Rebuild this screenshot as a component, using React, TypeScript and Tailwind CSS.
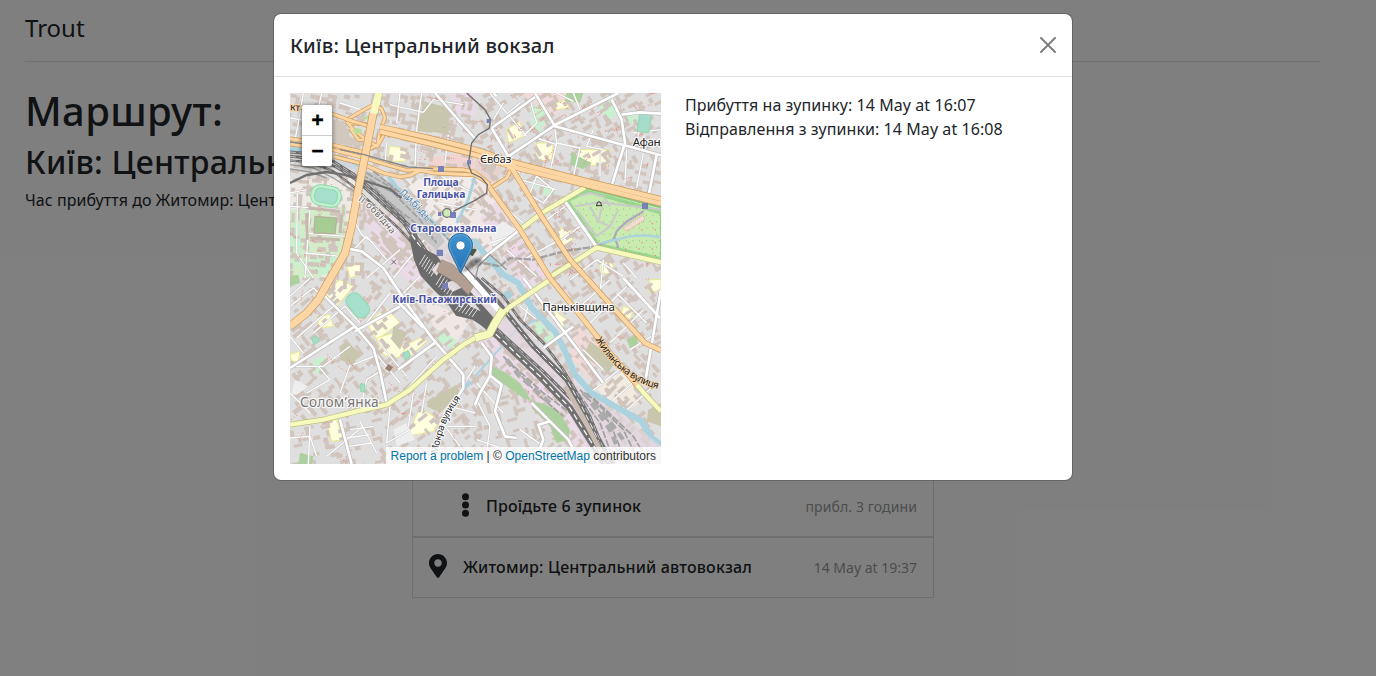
import React from "react";

type Pt = [number, number];

function rng(seed: number) {
  let s = seed;
  return () => {
    s = (s * 1664525 + 1013904223) % 4294967296;
    return s / 4294967296;
  };
}

/* Orientation of the street grid around a point of the map (map units). */
function blockAngle(x: number, y: number) {
  if (x < 560 && y < 250) return 13;
  if (x < 240 && y < 560) return 3;
  if (x < 560 && y < 620) return 42;
  if (x < 560) return x < 260 && y > 980 ? -12 : -38;
  if (y < 200) return -30;
  if (y < 330 && x > 760) return 14;
  if (x < 760 && y > 900) return 75;
  return y < 760 ? -32 : 48;
}

function makeBuildings() {
  const r = rng(42);
  const out: { x: number; y: number; w: number; h: number; a: number; l: boolean }[] = [];
  for (let y = 8; y < 1113; y += 25) {
    for (let x = 8; x < 1113; x += 27) {
      const px = x + (r() - 0.5) * 14;
      const py = y + (r() - 0.5) * 12;
      const flip = r() > 0.6 ? 90 : 0;
      const w = 14 + r() * 20;
      const h = 7 + r() * 6;
      const l = r() > 0.76;
      const sparse = (px < 560 && py > 560) || (px < 760 && py > 820);
      if (r() < (sparse ? 0.36 : 0.16)) continue;
      out.push({ x: px, y: py, w, h, a: blockAngle(px, py) + flip, l });
    }
  }
  return out;
}

function makeDots(n: number, seed: number, x0: number, y0: number, x1: number, y1: number): Pt[] {
  const r = rng(seed);
  const out: Pt[] = [];
  for (let i = 0; i < n; i++) {
    let x = x0 + r() * (x1 - x0);
    let y = y0 + r() * (y1 - y0);
    const run = 1 + Math.floor(r() * 5);
    const dx = (r() - 0.5) * 16;
    const dy = (r() - 0.5) * 16;
    for (let k = 0; k < run; k++) {
      out.push([x, y]);
      x += dx;
      y += dy;
    }
  }
  return out;
}

const buildings = makeBuildings();
const trees = [
  ...makeDots(60, 7, 560, 0, 1113, 260),
  ...makeDots(45, 9, 780, 330, 1113, 540),
  ...makeDots(40, 11, 560, 300, 1113, 900),
  ...makeDots(40, 13, 0, 560, 540, 1100),
  ...makeDots(24, 17, 0, 240, 200, 540),
  ...makeDots(20, 19, 380, 20, 560, 200),
];
const parkTrees: Pt[] = [];
for (let y = 310; y < 540; y += 19) for (let x = 840 + (y % 2) * 9; x < 1113; x += 20) parkTrees.push([x, y]);

const minorRoads = [
  "M40 0 25 90 15 140", "M95 0 85 45", "M0 75 60 85", "M150 30 230 55", "M330 0 320 90", "M395 0 380 110",
  "M300 35 400 58", "M400 58 430 20 520 35", "M380 110 375 220", "M475 125 465 210", "M290 150 285 215",
  "M0 340 150 350", "M22 300 20 480 70 555", "M60 350 45 555", "M45 480 150 490", "M45 420 165 430",
  "M0 300 50 290", "M190 470 230 430 290 500", "M190 380 215 425 250 450", "M310 555 420 420",
  "M230 555 330 470", "M340 600 420 520", "M440 330 555 350", "M400 350 460 420", "M455 250 550 300",
  "M0 610 60 555", "M0 640 70 585 130 640 20 735", "M70 720 165 640 210 690", "M0 820 100 820 180 760",
  "M85 820 120 860 50 900", "M180 815 150 900", "M190 815 250 790", "M215 930 230 860 270 835",
  "M0 900 60 960", "M40 780 0 730", "M240 760 330 870", "M265 745 350 850", "M230 690 340 640 400 700",
  "M300 600 230 690", "M330 910 440 790", "M300 940 290 1050 360 1010", "M370 900 355 1000",
  "M410 870 395 960", "M110 1090 220 1000", "M180 1010 250 1000", "M170 1035 240 1025", "M175 1060 245 1050",
  "M210 985 260 1080", "M0 1035 60 1030 80 1090", "M60 1000 55 1113", "M450 980 510 1060", "M480 940 555 960",
  "M530 860 555 820", "M470 1000 555 1000", "M600 0 650 60 710 130", "M640 30 610 80", "M655 60 690 30",
  "M720 20 740 90 700 130", "M850 0 870 50", "M800 0 850 25", "M910 110 890 160 940 170",
  "M795 110 800 150 780 235", "M800 150 870 165 850 250", "M1060 60 1040 150", "M1113 110 1030 120",
  "M930 180 930 250", "M1010 170 1005 270", "M1060 180 1040 285", "M800 155 740 135", "M690 240 640 210",
  "M690 260 800 290", "M720 300 740 250 790 290 760 330 710 300", "M770 380 840 330", "M800 450 870 400 900 430",
  "M640 340 700 390", "M650 470 740 550", "M600 450 690 420", "M700 500 810 440", "M840 560 920 500 1000 550",
  "M1000 510 1040 555", "M940 500 930 600", "M900 690 1010 580", "M960 750 1060 650", "M870 640 960 560",
  "M980 600 1070 690", "M1020 770 1100 720", "M720 620 700 690 740 740", "M690 640 740 680",
  "M560 610 600 680", "M940 830 880 770", "M900 900 1000 820 1060 900", "M960 930 1050 850", "M1000 960 1090 880",
  "M560 920 600 1000 590 1080", "M560 1040 620 1060 680 1100", "M760 1060 690 1010", "M560 870 640 960",
];

const whiteRoads = [
  "M735 0 795 100 1113 187", "M655 190 795 96 985 0", "M605 105 735 12", "M605 105 655 190 670 225",
  "M435 0 500 75 558 140", "M610 0 620 10", "M965 20 995 80 1005 150 965 278", "M995 65 1050 58 1113 62",
  "M1100 185 1075 312", "M690 410 600 480 550 525", "M825 325 920 462",
  "M100 605 195 700 250 765 270 835 290 930", "M300 555 360 645 430 740 520 845 520 885 450 995 430 1075",
  "M400 705 310 612", "M195 715 330 640", "M325 830 440 745", "M0 825 195 700",
  "M150 980 185 1113", "M165 465 215 475 280 525 310 570", "M700 555 940 870", "M1113 590 1065 870",
  "M600 848 570 900 555 935", "M600 848 635 875 615 955 645 1030 680 1035",
  "M725 930 780 985 835 1040 850 1070", "M780 985 745 995 760 1040 750 1065 700 1090",
  "M1000 555 1110 675", "M760 765 850 700", "M575 750 605 790 600 848",
];

const orangeRoads = [
  "M250 60 225 190 205 290 185 400 165 480 110 575 85 620 50 660 0 700",
  "M600 285 690 410 780 555 885 685 960 780 1040 875",
  "M665 225 755 370 840 500 890 555 975 650 1065 750 1113 772",
];

function Casing({ d, w, c, f }: { d: string[]; w: number; c: string; f: string }) {
  return (
    <g fill="none" strokeLinejoin="round">
      {d.map((p) => <path key={"c" + p} d={p} stroke={c} strokeWidth={w + 4} />)}
      {d.map((p) => <path key={"f" + p} d={p} stroke={f} strokeWidth={w} />)}
    </g>
  );
}

function Tracks({ d, w, dash = "18 10" }: { d: string; w: number; dash?: string }) {
  return (
    <g fill="none">
      <path d={d} stroke="#707070" strokeWidth={w} />
      <path d={d} stroke="#f5f5f5" strokeWidth={w * 0.2} strokeDasharray={dash} />
    </g>
  );
}

function Halo({ children, ...p }: React.SVGProps<SVGTextElement>) {
  return (
    <text stroke="#fff" strokeOpacity={0.85} strokeWidth={7} strokeLinejoin="round" paintOrder="stroke" {...p}>
      {children}
    </text>
  );
}

function CityMap() {
  return (
    <svg className="block h-full w-full" viewBox="0 0 1113 1113" fontFamily="'Noto Sans', sans-serif">
      <rect width="1113" height="1113" fill="#e0dfdf" />
      <g>
        <path d="M0 260 200 255 190 460 130 555H0Z" fill="#eeebe7" />
        <path d="M0 350 170 340 160 470 90 555H0Z" fill="#d3ecc9" />
        <path d="M340 260 560 250V440L440 390Z" fill="#f1ece9" />
        <path d="M415 195 510 180 555 195V230L420 222Z" fill="#f2d5d3" />
        <path d="M560 170 640 215 620 275 555 235Z" fill="#e8d2ce" />
        <path d="M555 250 600 290 690 410 590 490 500 440Z" fill="#f0e8e6" />
        <path d="M620 320 690 400 630 440 570 380Z" fill="#ebdbe8" />
        <path d="M630 480 690 430 780 555 700 590Z" fill="#ebdbe8" />
        <path d="M200 300 320 380 430 530 380 590 250 460Z" fill="#ebdbe8" />
        <path d="M480 0H555V70L500 60Z" fill="#ebdbe8" />
        <path d="M690 0 840 0 800 70 730 30Z" fill="#f0dada" />
        <path d="M555 730 640 680 790 810 890 900 1113 1060V1113H900L760 1000Z" fill="#ebdbe8" />
        <path d="M860 700 940 760 900 860 840 790Z" fill="#f2dad9" />
        <path d="M910 880 1010 830 1050 930 1000 960Z" fill="#f1ebe0" />
        <path d="M400 620 540 680 500 750 430 700Z" fill="#f0e8e6" />
      </g>
      <g>
        {["M300 160 350 165 345 205 290 205Z", "M230 690 290 645 330 690 260 740Z", "M260 735 310 720 350 780 310 800 275 780Z", "M340 760 400 730 410 745 350 800Z", "M390 945 450 980 430 1015 350 1030Z", "M110 985 140 980 160 1040 125 1045Z", "M100 600 150 560 190 580 140 640Z", "M80 670 120 665 130 700 90 705Z", "M650 110 690 85 700 130 655 150Z", "M740 150 790 150 785 200 735 205Z", "M870 170 960 170 950 220 860 215Z", "M790 30 840 20 835 45 800 50Z", "M800 410 840 400 850 440 820 460Z", "M930 510 970 510 965 545 930 540Z", "M790 650 830 680 815 710 790 680Z", "M1000 640 1030 650 1020 680 995 660Z", "M1080 560 1113 560V590L1075 600Z", "M170 520 215 510 220 540 180 555Z", "M0 785 30 775 25 805 5 805Z"].map((d) => (
          <path key={d} d={d} fill="#ffffe0" stroke="#ece98c" strokeWidth="3" />
        ))}
        {["M720 40 760 40 770 90 730 110Z", "M930 30 970 20 985 60 960 80 930 60Z", "M730 60 760 120 720 110Z", "M1000 65 1040 65 1040 95 1010 90Z", "M0 400 30 390 40 520 0 520Z", "M60 490 150 490 130 550 70 540Z", "M70 800 110 790 100 840 70 840Z", "M450 710 500 740 490 770 440 740Z", "M700 250 800 300 780 320Z", "M740 680 790 730 770 760 720 720Z"].map((d) => (
          <path key={d} d={d} fill="#c9f0cf" />
        ))}
      </g>
      <g fill="#d1c5bd" stroke="#c9bbb2" strokeWidth="0.6">
        {buildings.map((b, i) => (
          <path
            key={i}
            transform={`translate(${b.x.toFixed(1)} ${b.y.toFixed(1)}) rotate(${b.a})`}
            d={b.l ? `M0 0H${b.w.toFixed(0)}V${(b.h * 2).toFixed(0)}H${(b.w - 8).toFixed(0)}V${b.h.toFixed(0)}H0Z` : `M0 0H${b.w.toFixed(0)}V${b.h.toFixed(0)}H0Z`}
          />
        ))}
        <path d="M225 335 275 365 300 400 285 415 235 365ZM320 400 365 430 370 470 355 470ZM270 420 320 455 345 500 325 505 280 450Z" />
        <path d="M560 170 585 165 625 200 610 240 575 215ZM645 760 720 800 715 815 640 780Z" />
      </g>
      {["M130 80 165 85 180 130 230 150 215 160 130 150Z", "M400 25 480 45 475 120 380 115Z", "M150 760 175 750 210 780 190 815 150 800Z", "M310 700 350 720 330 770 305 740Z", "M900 745 980 800 955 840 880 790Z", "M420 920 500 875 510 900 450 960 410 940Z", "M1075 950 1113 930V1000L1070 985Z"].map((d, i) => (
        <path key={d} d={d} fill={i === 0 ? "#d2c8bf" : "#c8c7ad"} />
      ))}
      {["M830 0 880 0 870 30 825 25Z", "M845 175 865 190 905 210 880 228 840 215Z", "M1010 740 1040 725 1045 755 1020 765Z", "M0 550 25 545 30 570 0 580Z", "M30 1080 70 1090 65 1113 25 1113Z"].map((d) => (
        <path key={d} d={d} fill="#add19e" />
      ))}
      <path d="M15 860 55 880 20 905 5 900ZM310 1010 350 990 375 1040 320 1060Z" fill="#eee" />
      <path d="M600 410 640 385 680 412 610 462Z" fill="#eee" />
      <g fill="none" strokeLinejoin="round">
        {minorRoads.map((d) => <path key={d} d={d} stroke="#c4c2c2" strokeWidth="6.5" />)}
        {minorRoads.map((d) => <path key={"w" + d} d={d} stroke="#fff" strokeWidth="4" />)}
      </g>
      <g fill="#f3766b" fillOpacity="0.85">
        {trees.map(([x, y], i) => <circle key={i} cx={x} cy={y} r="1.6" />)}
      </g>

      {/* stadiums and courts */}
      <g stroke="#8fd9ac" strokeWidth="3">
        <rect x="62" y="278" width="92" height="62" rx="28" fill="#c2f0cf" transform="rotate(10 108 309)" />
        <rect x="74" y="288" width="68" height="42" rx="15" fill="#a6e0cc" transform="rotate(10 108 309)" />
        <rect x="163" y="612" width="80" height="48" rx="20" fill="#a6e0cc" transform="rotate(50 202 637)" />
        <rect x="1045" y="60" width="36" height="58" rx="8" fill="#a6dccb" transform="rotate(8 1063 89)" />
        <path d="M340 780 355 772 362 790 345 800ZM65 735 80 730 88 745 72 755ZM212 872 225 874 225 898 212 895Z" fill="#a6dccb" />
      </g>
      <g stroke="#bcae9f" strokeWidth="4">
        <path d="M75 370 140 375 135 422 72 420Z" fill="#a5cd93" />
        <path d="M55 345 150 355M50 360 52 440M60 435 150 440M155 365 150 420" fill="none" stroke="#c7b8ae" strokeWidth="9" />
      </g>

      {/* park */}
      <path d="M885 285 1113 343V507L920 460 825 325Z" fill="#c9ebb0" stroke="#84c784" strokeWidth="5" />
      <path d="M885 288 1113 350V365L970 322 890 300 840 325 930 452 915 458 827 325Z" fill="#9ad690" />
      <path d="M925 455 1113 497" stroke="#9ad690" strokeWidth="10" fill="none" />
      <g fill="#5ea25e">{parkTrees.map(([x, y], i) => x > 830 + (y - 310) * 0.62 + 12 && y > 310 && y < 470 + (x - 920) * 0.2 && <circle key={i} cx={x} cy={y} r="1.4" />)}</g>
      <g fill="#f3766b">{parkTrees.map(([x, y], i) => y > 380 && x > 985 && i % 2 === 0 && y < 470 + (x - 920) * 0.2 && <circle key={i} cx={x + 7} cy={y + 6} r="2" />)}</g>
      <g fill="none" stroke="#c9c9c9" strokeWidth="6">
        <path d="M855 340 930 328 1113 350M865 310 900 300 940 310 960 340M860 350 920 430M940 325 925 385 900 340M920 430 960 400 985 350M925 385 960 400M870 395 910 415M1065 350 1020 385 985 405 970 440 920 455M980 440 985 465" />
      </g>
      <g fill="none" stroke="#aaaab8" strokeWidth="6"><path d="M1060 355 1010 385 980 415 970 440 925 457M975 435 985 465" /></g>
      <path d="M935 450 1020 430 1060 427 1113 432" fill="none" stroke="#aad3df" strokeWidth="7" />
      <path d="M1000 405 1060 365 1065 380 1010 415Z" fill="#efdcd2" stroke="#f3766b" strokeWidth="2" strokeDasharray="3 4" />

      {/* woods */}
      <path d="M605 820 650 840 690 870 725 925 700 915 650 880 605 850Z" fill="#add19e" />
      <path d="M730 925 770 935 810 960 840 1010 835 1040 800 1050 780 1000 725 945Z" fill="#add19e" />

      {/* river */}
      <g fill="none" stroke="#aad3df" strokeLinejoin="round">
        <path d="M0 168 60 174 140 203 215 228" strokeWidth="17" />
        <path d="M295 250 345 318 420 380 470 430" strokeWidth="12" />
        <path d="M555 250 535 320 500 390" strokeWidth="9" />
        <path d="M550 440 590 490 640 545 685 570 725 645 795 715 825 775 855 845 905 900 1055 985 1085 1035 1113 1055" strokeWidth="18" />
        <path d="M555 850 680 710 740 680" strokeWidth="6" />
        <path d="M525 885 540 865" strokeWidth="12" />
      </g>
      <circle cx="653" cy="606" r="13" fill="#aacfdb" />

      {/* railway yards */}
      <path d="M0 190Q100 170 190 240Q300 330 370 405T450 520L555 640L620 710L800 890L920 1113H1113V1060Q1010 970 890 900Q800 830 730 730L610 590L520 500L400 390L300 270L150 195Z" fill="#dfd6dd" fillOpacity="0.7" />
      <path d="M215 225 300 268 345 312 410 375 465 445 440 470 350 395 270 310 205 262Z" fill="#c6c6c6" />
      <g fill="none" stroke="#a0a0a0" strokeWidth="5" strokeDasharray="22 5">
        <path d="M215 245 310 300 390 380 440 450" />
        <path d="M230 240 330 300 410 385" />
        <path d="M250 235 350 315 440 400 520 490" />
        <path d="M235 265 290 320 350 380" />
        <path d="M300 330 370 385 430 440" />
        <path d="M870 890 960 990 1010 1113" />
        <path d="M890 900 1000 1010 1050 1113" />
        <path d="M910 915 1030 1030 1080 1113" />
        <path d="M850 880 930 990 975 1113" />
        <path d="M650 800 760 900 840 960" />
        <path d="M640 790 750 910 820 970" />
      </g>
      <g fill="none" stroke="#ababab" strokeWidth="13" strokeDasharray="24 16">
        <path d="M880 900 940 960 1000 1040" />
        <path d="M905 930 960 1010 990 1080" />
        <path d="M650 800 690 850 780 930" />
      </g>
      <path d="M470 550 545 575 580 630 540 640Z" fill="#e8e0e6" />
      <Tracks d="M0 177 60 182 130 205 190 243 260 300 320 360 370 410 395 465" w={9} />
      <Tracks d="M0 190 70 197 140 222 200 262 280 335 340 390 380 450" w={9} />
      <Tracks d="M0 203 60 207 130 235 190 280 260 345 330 410 380 465" w={7} />
      <path d="M0 215 70 225 130 255 200 300 M0 228 60 237 110 255" stroke="#9b9b9b" strokeWidth="4" fill="none" />
      <path d="M0 270 50 246 110 237 160 245 220 262 300 288 335 315" stroke="#707070" strokeWidth="7" fill="none" />
      <Tracks d="M365 425 420 500 500 600 560 670 640 745 750 850 840 945 945 1113" w={20} />
      <Tracks d="M385 440 440 520 520 600 570 660 650 735 760 835 850 925 930 1040 970 1113" w={9} />
      <path d="M358 432 392 462 440 487 478 540 545 600 625 690 600 715 548 680 498 668 470 628 432 592 392 548 372 500Z" fill="#6b6b6b" />
      <g fill="#dcd6d9">
        <path d="M425 530 446 506 458 520 440 548Z" />
        <path d="M462 573 492 560 520 582 488 596Z" />
        <path d="M520 612 548 622 572 655 540 640Z" />
      </g>
      <g stroke="#f1f1f1" strokeWidth="2.6">
        {[0, 1, 2, 3, 4, 5].map((i) => (
          <path key={i} d={`M${388 + i * 7} ${515 + i * 7}l18 -30M${438 + i * 8} ${576 + i * 7}l18 -30M${496 + i * 10} ${652 + i * 4}l20 -28`} />
        ))}
      </g>
      <path d="M455 500 490 515 550 580 535 605 500 570 440 535Z" fill="#b39f91" stroke="#9d8a7e" strokeWidth="2" />
      <path d="M495 490 555 455 562 470 525 505Z" fill="#c6c6c6" />
      <path d="M530 480Q545 462 560 470L548 490Z" fill="#4d5a48" />
      <Tracks d="M555 555 610 610 665 680 730 760 790 820 830 860 870 930 930 1050 955 1113" w={15} />
      <Tracks d="M575 555 640 610 690 680 760 750 820 830 850 880 900 970 960 1113" w={8} />
      <path d="M825 880 880 975 945 1100" stroke="#c9bbaf" strokeWidth="14" fill="none" />
      <path d="M515 525 640 660" stroke="#777" strokeWidth="24" fill="none" />
      <path d="M516 526 632 658" stroke="#fff" strokeWidth="18" fill="none" />
      <path d="M555 505 630 520 660 495 730 500 820 475 920 460" stroke="#8f8f8f" strokeWidth="7" strokeDasharray="22 4" opacity=".75" fill="none" />

      <Casing d={whiteRoads} w={8} c="#bcbaba" f="#fff" />
      <path d="M920 462 825 325" stroke="#fff" strokeWidth="8" fill="none" />
      <Casing d={["M885 283 755 360 690 410", "M775 555 920 464 1113 508", "M785 557 655 645 615 690", "M555 735 520 755 460 800 360 890 290 935 200 955 100 980 0 995", "M1040 875 1075 915 1113 955", "M270 0 262 40 240 110"]} w={13} c="#bcc07b" f="#f7fabf" />
      <Casing d={["M640 650 615 690 598 722 555 735"]} w={22} c="#bcc07b" f="#f7fabf" />

      {/* motorways and interchange */}
      <Casing d={["M165 83 205 60 250 35 275 48 285 75 275 100", "M170 85 190 110 235 145 262 160 268 120", "M180 90 245 95 240 70", "M180 105 205 140 235 142", "M275 100 285 120 265 155 230 172"]} w={8} c="#cf9a55" f="#fcd6a4" />
      <ellipse cx="203" cy="114" rx="13" ry="8" fill="#b9df9b" />
      <path d="M215 78 240 64 242 80Z" fill="#b9df9b" />
      <Casing d={["M30 43 125 62 185 84 250 103", "M0 137 120 154 220 178", "M0 153 130 171 225 195 300 218 350 232 430 227 520 230 555 237", "M130 190 215 212 280 240 330 252 360 247 390 232 430 240 555 246 595 270 600 287", "M600 287 650 255 665 225", "M555 238 600 275"]} w={9} c="#cf9a55" f="#fcd6a4" />
      <Casing d={["M270 101 420 135 558 170 660 205 895 265 1113 318", "M270 116 420 152 558 186 660 220 895 278 1113 332"]} w={13} c="#cf9a55" f="#fcd6a4" />
      <Casing d={[orangeRoads[0]]} w={21} c="#cf9a55" f="#fcd6a4" />
      <Casing d={orangeRoads.slice(1)} w={13} c="#cf9a55" f="#fcd6a4" />
      <path d="M266 0 250 62" stroke="#f7fabf" strokeWidth="20" />
      <path d="M0 147 120 163M150 170 220 184 300 207 355 222 430 227" stroke="#888" strokeWidth="4" fill="none" />
      <path d="M665 205 665 230" stroke="#fcd6a4" strokeWidth="26" />

      {/* light rail */}
      <g fill="none" stroke="#6f6f6f" strokeWidth="4">
        <path d="M530 0 585 50 602 80 598 105 565 125 545 150 535 215 545 240 575 255 592 275 590 300 555 322 490 355" />
        <circle cx="471" cy="360" r="13" fill="#cdeab8" />
        <path d="M555 560 565 520 600 485 650 530" stroke="#999" />
      </g>
      <g fill="#7880b8">
        <path d="M444 219h18v18h-18zM531 202h12v12h-12zM590 78h12v12h-12zM480 357h18v18h-18zM444 357h10v12h-10zM440 470h19v19h-19zM1056 330h18v18h-18zM456 570h18v18h-18z" />
      </g>
      <path d="M304 500l14 14m0-14l-14 14" stroke="#333" strokeWidth="2" />
      <rect x="289" y="816" width="17" height="17" fill="#9b7d70" transform="rotate(35 297 824)" />
      <path d="M920 338q0-12 7-12t7 12M918 338h18" stroke="#333" strokeWidth="3" fill="none" />

      <defs>
        <path id="lybid" d="M326 302Q370 338 425 402" />
        <path id="bypass" d="M203 322Q250 352 312 436" />
        <path id="mokra" d="M442 1084Q462 970 519 909" />
        <path id="zhyl" d="M916 739Q985 862 1112 889" />
      </defs>
      <Halo fontSize="31" fill="#4a80ae" strokeWidth={4}><textPath href="#lybid" textLength="120">Либідь</textPath></Halo>
      <Halo fontSize="28" fill="#666" strokeWidth={6}><textPath href="#bypass" textLength="144">ІІ обвідна</textPath></Halo>
      <Halo fontSize="29" fill="#222"><textPath href="#mokra" textLength="184">Мокра вулиця</textPath></Halo>
      <Halo fontSize="30" fill="#222" stroke="#fcd6a4" strokeWidth={5}><textPath href="#zhyl" textLength="246">Жилянська вулиця</textPath></Halo>
      <Halo x="-16" y="52" fontSize="30" fill="#222" stroke="#fcd6a4" transform="rotate(4 0 45)">ект</Halo>
      <g fontWeight="700" fontSize="31" fill="#4750a5">
        <Halo x="400" y="279" textLength="106">Площа</Halo>
        <Halo x="380" y="315" textLength="146">Галицька</Halo>
        <Halo x="361" y="416" textLength="258">Старовокзальна</Halo>
        <Halo x="307" y="629" textLength="314">Київ-Пасажирський</Halo>
      </g>
      <g fontSize="35" fill="#222">
        <Halo x="570" y="210" textLength="94">Євбаз</Halo>
        <Halo x="1028" y="160" textLength="84">Афан</Halo>
        <Halo x="757" y="655" textLength="218">Паньківщина</Halo>
      </g>
      <Halo x="30" y="943" fontSize="41" fill="#777" textLength="236">Солом’янка</Halo>
    </svg>
  );
}

function Pin() {
  return (
    <svg className="absolute left-[158px] top-[140px] h-[41px] w-[41px]" viewBox="0 0 41 41">
      <defs>
        <linearGradient id="pin" x1="0" y1="0" x2="0" y2="1">
          <stop offset="0" stopColor="#3f94d0" />
          <stop offset="1" stopColor="#2471b5" />
        </linearGradient>
        <filter id="soft"><feGaussianBlur stdDeviation="1.2" /></filter>
      </defs>
      <path d="M13 40 21 29Q26 24 32 25Q37 28 32 32Z" fill="#000" opacity=".4" filter="url(#soft)" />
      <path d="M12.5 .5C5.7.5.5 5.9.5 12.4c0 2.6 1 5.2 2.2 7.6L12.5 40.2 22.3 20c1.2-2.4 2.2-5 2.2-7.6C24.500 5.900 19.300.5 12.500.5Z" fill="url(#pin)" stroke="#2e6c97" />
      <path d="M12.5 1.700C6.400 1.700 1.700 6.600 1.700 12.400c0 2.300.8 4.600 2.100 7.100l8.700 18 8.700-18c1.300-2.500 2.100-4.800 2.100-7.100C23.300 6.600 18.600 1.700 12.500 1.700Z" fill="none" stroke="#fff" strokeOpacity=".2" />
      <circle cx="12.500" cy="12.500" r="4.500" fill="#fff" stroke="#2e6c97" strokeWidth=".7" />
    </svg>
  );
}

export default function App() {
  return (
    <div className="relative h-[676px] w-full overflow-hidden bg-white font-['Noto_Sans',sans-serif] text-base leading-6 text-[#212529]">
      <div className="ml-[25px] w-[1295px]">
        <header className="h-[62px] border-b border-[#dee2e6] pt-2.5 text-2xl leading-9">Trout</header>
        <h1 className="mt-[25px] text-[40px] font-medium leading-[48px] tracking-[0.4px]">Маршрут:</h1>
        <h2 className="mt-2 w-[600px] whitespace-nowrap text-[32px] font-medium leading-[38px] tracking-[0.25px]">Київ: Центральний вокзал</h2>
        <p className="mt-[7px] tracking-[0.05px]">Час прибуття до Житомир: Центральний автовокзал</p>
      </div>
      <ul className="ml-[412px] mt-[264px] w-[522px] border border-[#dfdfdf]">
        <li className="flex h-[61px] items-center border-b-2 border-[#dfdfdf] pb-0.5 pl-[49px] pr-4">
          <svg className="mb-0.5 mr-[17px] h-6 w-[7px]" viewBox="0 0 7 24" fill="#212529">
            <circle cx="3.500" cy="3.700" r="3.500" />
            <circle cx="3.500" cy="12" r="3.500" />
            <circle cx="3.500" cy="20.300" r="3.500" />
          </svg>
          <span className="font-medium tracking-[0.16px]">Проїдьте 6 зупинок</span>
          <span className="ml-auto pt-0.5 text-sm tracking-[0.1px] text-[#999]">прибл. 3 години</span>
        </li>
        <li className="flex h-[59px] items-center pb-px pl-4 pr-4">
          <svg className="mb-0.5 mr-4 h-6 w-[18px]" viewBox="0 0 384 512" fill="#212529">
            <path d="M172.300 501.700C27 291 0 269.400 0 192 0 86 86 0 192 0s192 86 192 192c0 77.400-27 99-172.300 309.700-9.500 13.800-29.900 13.800-39.400 0zM192 272c44.200 0 80-35.800 80-80s-35.800-80-80-80-80 35.800-80 80 35.800 80 80 80z" />
          </svg>
          <span className="font-medium tracking-[0.18px]">Житомир: Центральний автовокзал</span>
          <span className="ml-auto pt-0.5 text-sm text-[#999]">14 May at 19:37</span>
        </li>
      </ul>

      <div className="absolute inset-0 bg-black/50 pl-[273px] pt-[13px]">
        <section role="dialog" className="h-[468px] w-[800px] rounded-lg border border-black/20 bg-white bg-clip-padding">
          <header className="flex h-[63px] items-center justify-between border-b border-[#dee2e6] px-4">
            <h5 className="pt-0.5 text-xl font-medium leading-[30px] tracking-[0.22px]">Київ: Центральний вокзал</h5>
            <button aria-label="Close" className="opacity-50">
              <svg className="h-4 w-4" viewBox="0 0 16 16" fill="#000">
                <path d="M.293.293a1 1 0 0 1 1.414 0L8 6.586 14.293.293a1 1 0 1 1 1.414 1.414L9.414 8l6.293 6.293a1 1 0 0 1-1.414 1.414L8 9.414l-6.293 6.293a1 1 0 0 1-1.414-1.414L6.586 8 .293 1.707a1 1 0 0 1 0-1.414z" />
              </svg>
            </button>
          </header>
          <div className="flex gap-6 p-4">
            <div className="relative h-[371px] w-[371px] shrink-0 overflow-hidden">
              <CityMap />
              <Pin />
              <div className="absolute left-3 top-3 w-[30px] rounded-[2px] bg-white text-center font-['Liberation_Mono',monospace] text-[21px] font-bold leading-[30px] text-black shadow-[0_1px_5px_rgba(0,0,0,0.65)]">
                <button className="block h-[31px] w-full border-b border-[#ccc] pl-px pt-0.5 leading-[28px] [-webkit-text-stroke:0.4px_#000]"><span className="block pt-px">+</span></button>
                <button className="block h-[30px] w-full pl-px pt-0.5 leading-[28px] [-webkit-text-stroke:0.4px_#000]"><span className="block pt-px">−</span></button>
              </div>
              <div className="absolute bottom-0 right-0 whitespace-nowrap bg-white/80 px-[5px] pt-px font-['Liberation_Sans',sans-serif] text-xs leading-4 text-[#333]">
                <span className="text-[#0078a8]">Report a problem</span> | © <span className="text-[#0078a8]">OpenStreetMap</span> contributors
              </div>
            </div>
            <div className="tracking-[0.07px]">
              <p>Прибуття на зупинку: 14 May at 16:07</p>
              <p>Відправлення з зупинки: 14 May at 16:08</p>
            </div>
          </div>
        </section>
      </div>
    </div>
  );
}
